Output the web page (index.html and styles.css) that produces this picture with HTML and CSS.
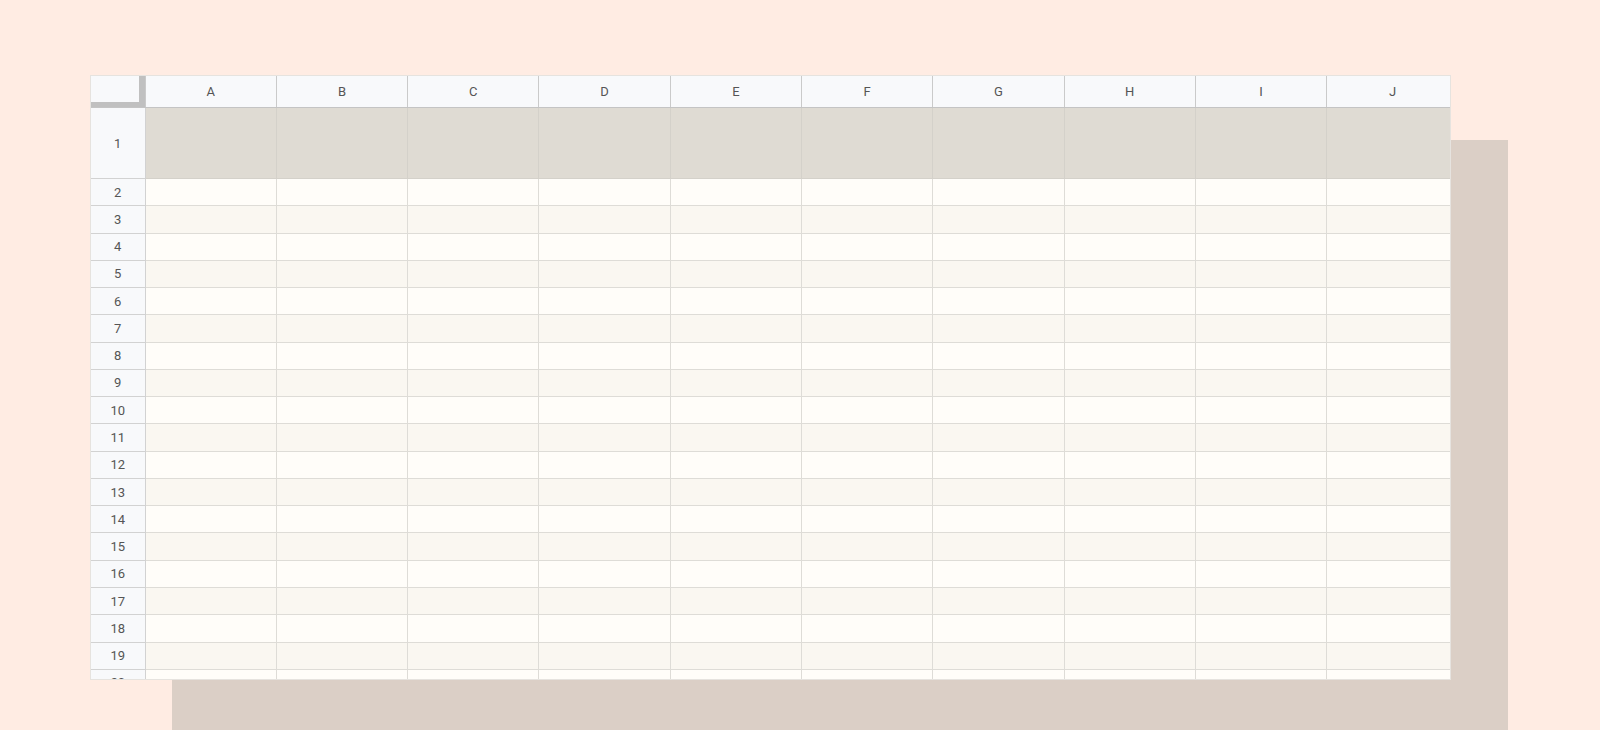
FILE: index.html
```html
<!DOCTYPE html>
<html lang="en">
<head>
<meta charset="utf-8">
<title>Sheet</title>
<link rel="stylesheet" href="styles.css">
</head>
<body>
<main class="stage">
  <div class="sheet">
    <table class="grid">
      <colgroup>
        <col class="col-idx">
        <col class="col"><col class="col"><col class="col"><col class="col"><col class="col">
        <col class="col"><col class="col"><col class="col"><col class="col"><col class="col">
      </colgroup>
      <thead>
        <tr class="head">
          <th class="corner"></th>
          <th>A</th><th>B</th><th>C</th><th>D</th><th>E</th><th>F</th><th>G</th><th>H</th><th>I</th><th>J</th>
        </tr>
      </thead>
      <tbody>
        <tr class="r-top"><th>1</th><td></td><td></td><td></td><td></td><td></td><td></td><td></td><td></td><td></td><td></td></tr>
        <tr><th>2</th><td></td><td></td><td></td><td></td><td></td><td></td><td></td><td></td><td></td><td></td></tr>
        <tr><th>3</th><td></td><td></td><td></td><td></td><td></td><td></td><td></td><td></td><td></td><td></td></tr>
        <tr><th>4</th><td></td><td></td><td></td><td></td><td></td><td></td><td></td><td></td><td></td><td></td></tr>
        <tr><th>5</th><td></td><td></td><td></td><td></td><td></td><td></td><td></td><td></td><td></td><td></td></tr>
        <tr><th>6</th><td></td><td></td><td></td><td></td><td></td><td></td><td></td><td></td><td></td><td></td></tr>
        <tr><th>7</th><td></td><td></td><td></td><td></td><td></td><td></td><td></td><td></td><td></td><td></td></tr>
        <tr><th>8</th><td></td><td></td><td></td><td></td><td></td><td></td><td></td><td></td><td></td><td></td></tr>
        <tr><th>9</th><td></td><td></td><td></td><td></td><td></td><td></td><td></td><td></td><td></td><td></td></tr>
        <tr><th>10</th><td></td><td></td><td></td><td></td><td></td><td></td><td></td><td></td><td></td><td></td></tr>
        <tr><th>11</th><td></td><td></td><td></td><td></td><td></td><td></td><td></td><td></td><td></td><td></td></tr>
        <tr><th>12</th><td></td><td></td><td></td><td></td><td></td><td></td><td></td><td></td><td></td><td></td></tr>
        <tr><th>13</th><td></td><td></td><td></td><td></td><td></td><td></td><td></td><td></td><td></td><td></td></tr>
        <tr><th>14</th><td></td><td></td><td></td><td></td><td></td><td></td><td></td><td></td><td></td><td></td></tr>
        <tr><th>15</th><td></td><td></td><td></td><td></td><td></td><td></td><td></td><td></td><td></td><td></td></tr>
        <tr><th>16</th><td></td><td></td><td></td><td></td><td></td><td></td><td></td><td></td><td></td><td></td></tr>
        <tr><th>17</th><td></td><td></td><td></td><td></td><td></td><td></td><td></td><td></td><td></td><td></td></tr>
        <tr><th>18</th><td></td><td></td><td></td><td></td><td></td><td></td><td></td><td></td><td></td><td></td></tr>
        <tr><th>19</th><td></td><td></td><td></td><td></td><td></td><td></td><td></td><td></td><td></td><td></td></tr>
        <tr><th>20</th><td></td><td></td><td></td><td></td><td></td><td></td><td></td><td></td><td></td><td></td></tr>
      </tbody>
    </table>
  </div>
</main>
</body>
</html>
```

FILE: styles.css
```css
html, body {
  margin: 0;
  padding: 0;
  height: 100%;
  overflow: hidden;
  background: #ffece3;
}

.stage {
  position: relative;
  z-index: 0;
  width: 1361px;
  margin: 75px 0 0 90px;
}

.stage::before {
  content: "";
  position: absolute;
  z-index: -1;
  left: 82px;
  top: 65px;
  width: 1336px;
  height: 590px;
  background: #dbcfc6;
}

.sheet {
  width: 1359px;
  height: 603px;
  overflow: hidden;
  border: 1px solid #e6e3df;
  background: #fffdf9;
}

.grid {
  border-collapse: collapse;
  table-layout: fixed;
  width: 1367px;
  font-family: Roboto, "Liberation Sans", Arial, sans-serif;
  font-size: 13px;
  color: #555555;
}

.col-idx { width: 54px; }
.col { width: 131.3px; }

.grid th,
.grid td {
  padding: 0;
  border: 1px solid #dedcd7;
}

.grid th {
  font-weight: 400;
  background: #f8f9fb;
  text-align: center;
  border-color: #d2d2d2;
}

.grid tr:first-child > * { border-top: 0; }
.grid tr > :first-child { border-left: 0; }
.grid tr > :last-child { border-right: 0; }

.head th {
  height: 31px;
  border-bottom: 1px solid #c4c4c4;
  border-right-color: #cacaca;
  border-left-color: #cacaca;
}

.head .corner {
  background: #f8f9fb;
  box-shadow: inset -6px -5px 0 #c0c0c0;
  border-right: 0;
}

tbody th {
  border-right: 1px solid #c4c4c4;
}

tbody tr { height: 27.28px; }

.r-top { height: 71px; }
.r-top td { background: #dfdbd3; border-color: #d4d1ca; }

tbody tr:nth-child(even) td { background: #fffdf9; }
tbody tr:nth-child(odd):not(.r-top) td { background: #faf7f1; }
```
